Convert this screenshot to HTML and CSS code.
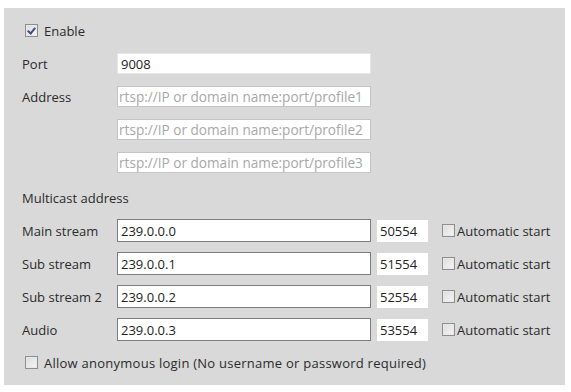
FILE: index.html
```html
<!DOCTYPE html>
<html lang="en">

<head>
    <meta charset="UTF-8" />
    <title>RTSP Settings</title>
    <link rel="stylesheet" href="styles.css">
</head>

<body>

    <div class="panel">
        <div class="row">
            <label class="check-label"><span class="box checked"></span>Enable</label>
        </div>

        <div class="row">
            <span class="label">Port</span>
            <input class="field plain" type="text" value="9008">
        </div>

        <div class="row">
            <span class="label">Address</span>
            <input class="field light" type="text" placeholder="rtsp://IP or domain name:port/profile1">
        </div>
        <div class="row">
            <span class="label"></span>
            <input class="field light" type="text" placeholder="rtsp://IP or domain name:port/profile2">
        </div>
        <div class="row">
            <span class="label"></span>
            <input class="field light" type="text" placeholder="rtsp://IP or domain name:port/profile3">
        </div>

        <div class="row section">Multicast address</div>

        <div class="row">
            <span class="label">Main stream</span>
            <input class="field dark" type="text" value="239.0.0.0">
            <input class="port" type="text" value="50554">
            <label class="auto"><span class="box"></span>Automatic start</label>
        </div>
        <div class="row">
            <span class="label">Sub stream</span>
            <input class="field dark" type="text" value="239.0.0.1">
            <input class="port" type="text" value="51554">
            <label class="auto"><span class="box"></span>Automatic start</label>
        </div>
        <div class="row">
            <span class="label">Sub stream 2</span>
            <input class="field dark" type="text" value="239.0.0.2">
            <input class="port" type="text" value="52554">
            <label class="auto"><span class="box"></span>Automatic start</label>
        </div>
        <div class="row">
            <span class="label">Audio</span>
            <input class="field dark" type="text" value="239.0.0.3">
            <input class="port" type="text" value="53554">
            <label class="auto"><span class="box"></span>Automatic start</label>
        </div>

        <div class="row">
            <label class="check-label wide"><span class="box"></span>Allow anonymous login (No username or password required)</label>
        </div>
    </div>

</body>

</html>
```

FILE: styles.css
```css
body {
    margin: 0;
    background: #ffffff;
    font-family: 'Open Sans', 'Noto Sans', sans-serif;
    font-size: 13px;
    color: #2b2b2b;
}

.panel {
    margin: 8px 6px 0 4px;
    height: 377px;
    box-sizing: border-box;
    padding: 6px 0 0 18px;
    background: #d9d9d9;
}

.row {
    display: flex;
    align-items: center;
    height: 33px;
}

.section {
    height: 35px;
    padding-top: 2px;
    box-sizing: border-box;
}

.label {
    width: 95px;
    flex-shrink: 0;
}

.field {
    width: 254px;
    height: 21px;
    box-sizing: border-box;
    padding: 0 3px;
    font: inherit;
    color: #222;
    background: #ffffff;
    outline: none;
}

.plain {
    border: 1px solid #e6e6e6;
}

.light {
    border: 1px solid #c4c4c4;
    padding: 0 1px;
}

.light::placeholder {
    color: #a8a8a8;
    font-size: 13.6px;
}

.dark {
    height: 23px;
    border: 1px solid #7d7d7d;
}

.port {
    width: 51px;
    height: 22px;
    box-sizing: border-box;
    margin-left: 6px;
    padding: 0 3px;
    border: none;
    font: inherit;
    color: #222;
    background: #ffffff;
    outline: none;
}

.check-label {
    display: flex;
    align-items: center;
    margin-left: 3px;
}

.check-label .box {
    margin-right: 6px;
}

.wide {
    letter-spacing: 0.25px;
}

.auto {
    display: flex;
    align-items: center;
    margin-left: 14px;
}

.auto .box {
    margin-right: 2px;
}

.box {
    width: 11px;
    height: 11px;
    border: 1px solid #8e8e8e;
    background: linear-gradient(135deg, #dcdcdc, #f6f6f6);
    box-shadow: inset 0 0 0 1px #e8e8e8;
    position: relative;
}

.checked::after {
    content: '';
    position: absolute;
    left: 3px;
    top: 1px;
    width: 3px;
    height: 6px;
    border-right: 2px solid #3c4d8a;
    border-bottom: 2px solid #3c4d8a;
    transform: rotate(40deg);
}
```
